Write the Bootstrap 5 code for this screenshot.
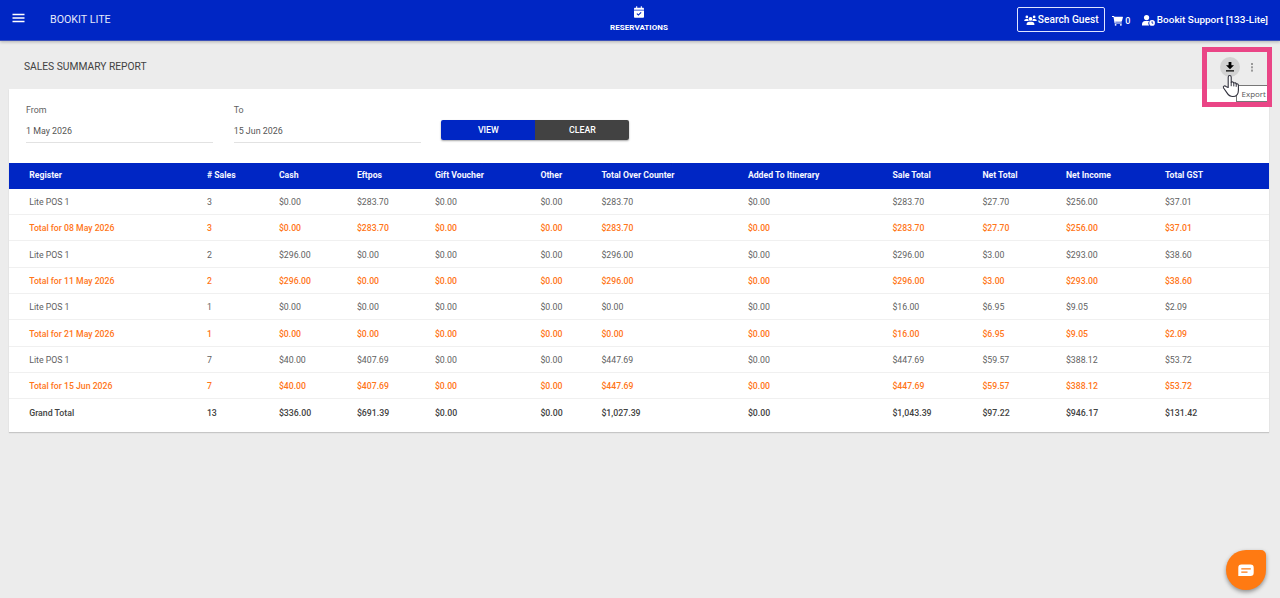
<!DOCTYPE html>
<html lang="en">
<head>
<meta charset="utf-8">
<meta name="viewport" content="width=device-width, initial-scale=1">
<title>Sales Summary Report</title>
<link href="https://cdn.jsdelivr.net/npm/bootstrap@5.3.0/dist/css/bootstrap.min.css" rel="stylesheet">
<style>
body{font-family:Roboto,"Liberation Sans",sans-serif;font-size:9px;line-height:12px;background:#ececec;color:#616161;height:598px;overflow:hidden}
svg{display:block;flex:none}
.topbar{height:41px;background:#0026c4;border-bottom:1px solid #3c50b8;box-shadow:0 1px 3px rgba(0,0,0,.25);color:#fff;padding:0 12px}
.side{flex:1 1 0}
.brand{font-size:10.7px;margin-left:25px;margin-top:-1px;color:#e4e8fa}
.menu-icon{margin-top:-4px}
.res{font-size:8px;font-weight:700;line-height:10px;padding-top:6px;margin-left:-2px}
.res-label{margin-top:5px;letter-spacing:.05px}
.search{border:1px solid #dfe4ff;border-radius:2px;height:25px;width:88px;font-size:10.2px;font-weight:500;margin-top:-1px;gap:1px}
.cart{font-size:9px;font-weight:500;margin-left:7px;margin-top:2px;gap:2px}
.account{font-size:9.95px;font-weight:500;margin-left:11.5px;margin-top:0;gap:2px;white-space:nowrap}
.titlebar{height:48px;padding:0 15px 0 24px}
.page-title{font-size:10.25px;line-height:12px;color:#424242;margin-top:4px}
.tools{margin-top:3px;margin-right:11px;gap:10px}
.export{width:20px;height:20px;border-radius:50%;background:#d2d2d2}
.report{margin:-.5px 11px 0 9.4px;height:343.5px;background:#fff;box-shadow:0 1px 1px rgba(0,0,0,.16)}
.filters{height:74px;padding:15.5px 0 0 16.6px}
.field{width:187.5px;height:38.5px;border-bottom:1px solid #e2e2e2;margin-right:20.2px;font-size:8.9px}
.field label{display:block;margin-bottom:9px}
.field span{color:#555}
.actions{margin-top:16px;height:20px;width:188px;border-radius:2px;overflow:hidden;box-shadow:0 1px 2px rgba(0,0,0,.35)}
.actions .btn{font-size:8.8px;line-height:20px;padding:0;border:0;border-radius:0;font-weight:500;color:#fff;background:#0026c4}
.actions .btn.clear{background:#424242}
.sales{table-layout:fixed;width:100%;border-collapse:separate;border-spacing:0;font-size:8.75px}
.sales th,.sales td{padding:1.4px 0 0;height:26.35px;white-space:nowrap;border-bottom:1px solid #f0f0f0;vertical-align:middle}
.sales th{height:26px;padding:0 0 1.4px;background:#0026c4;color:#f5f6ff;font-size:8.7px;font-weight:700;border:0}
.sales th:first-child,.sales td:first-child{padding-left:19.8px}
.sales .sum td{color:#ff7619;font-weight:500;font-size:8.7px}
.sales .grand td{color:#424242;font-weight:500;border:0}
.highlight{position:absolute;left:1202px;top:47px;width:70px;height:60px;border:5px solid #ea4586}
.tip{position:absolute;left:1236px;top:85px;width:31px;height:17px;border:1px solid #777;border-right:0;background:#fff;color:#575757;font:8px/15px "Open Sans",sans-serif;padding-left:4.5px;white-space:nowrap}
.hand{position:absolute;left:1222px;top:74px}
.chat{position:absolute;left:1226px;top:550px;width:40px;height:40px;border-radius:20px 5px 20px 20px;background:#ff7a12;box-shadow:0 2px 4px rgba(0,0,0,.4)}
</style>
</head>
<body>
<header class="topbar d-flex align-items-center">
  <div class="side d-flex align-items-center">
    <svg class="menu-icon" width="13" height="10" viewBox="0 0 13 10"><path d="M.5 1.5h12M.5 5h12M.5 8.5h12" stroke="#fff" stroke-width="1.5"/></svg>
    <div class="brand">BOOKIT LITE</div>
  </div>
  <div class="res d-flex flex-column align-items-center align-self-start">
    <svg width="10" height="12" viewBox="0 0 448 512"><path fill="#fff" d="M96 0h48v64h160V0h48v64h48c26 0 48 22 48 48v48H0v-48c0-26 22-48 48-48h48zM0 192h448v272c0 26-22 48-48 48H48c-26 0-48-22-48-48zm337 98-34-34-105 105-53-53-34 34 87 87z"/></svg>
    <div class="res-label">RESERVATIONS</div>
  </div>
  <div class="side d-flex align-items-center justify-content-end">
    <div class="search d-flex align-items-center justify-content-center">
      <svg width="13" height="10" viewBox="0 0 640 512"><path fill="#fff" d="M224 200a96 96 0 1 1 192 0 96 96 0 1 1-192 0M64 100a70 70 0 1 1 140 0 70 70 0 1 1-140 0m372 0a70 70 0 1 1 140 0 70 70 0 1 1-140 0M0 300c0-60 40-100 100-100h70c20 0 25 5 25 5 0 50 20 85 50 105H0zm395 10c30-20 50-55 50-105l25-5h70c60 0 100 40 100 100v10zM120 480c0-80 50-130 130-130h140c80 0 130 50 130 130v32H120z"/></svg>
      <span>Search Guest</span>
    </div>
    <div class="cart d-flex align-items-center">
      <svg width="11" height="10" viewBox="0 0 576 512"><path fill="#fff" d="M0 0h95c18 0 28 12 31 32h425c17 0 27 14 23 30l-52 200c-5 18-18 28-36 28H170l8 46h334v48H138L78 48H0z"/><circle cx="190" cy="458" r="50" fill="#fff"/><circle cx="465" cy="458" r="50" fill="#fff"/></svg>
      <span>0</span>
    </div>
    <div class="account d-flex align-items-center">
      <svg width="13" height="11" viewBox="0 0 640 540"><circle cx="225" cy="128" r="128" fill="#fff"/><path fill="#fff" d="M0 512v-62c0-90 60-160 150-160h150c40 0 60 10 60 10-70 60-60 150-10 212z"/><circle cx="496" cy="390" r="140" fill="#fff"/><path d="M496 310v90h60" fill="none" stroke="#0026c4" stroke-width="44"/></svg>
      <span>Bookit Support [133-Lite]</span>
    </div>
  </div>
</header>

<div class="titlebar d-flex align-items-center justify-content-between">
  <h1 class="page-title mb-0 fw-normal">SALES SUMMARY REPORT</h1>
  <div class="tools d-flex align-items-center">
    <div class="export d-flex align-items-center justify-content-center"><svg width="8" height="10" viewBox="0 0 8 10"><path d="M2.6 0h2.8v3.2H8L4 7.2 0 3.2h2.6zM0 8.2h8v1.3H0z"/></svg></div>
    <svg width="4" height="10" viewBox="0 0 4 10" fill="#999"><rect x="1" y="1" width="2" height="2"/><rect x="1" y="4.3" width="2" height="2"/><rect x="1" y="7.6" width="2" height="2"/></svg>
  </div>
</div>

<main class="report">
  <div class="filters d-flex">
    <div class="field"><label>From</label><span>1 May 2026</span></div>
    <div class="field"><label>To</label><span>15 Jun 2026</span></div>
    <div class="actions d-flex"><button class="btn flex-fill w-50">VIEW</button><button class="btn clear flex-fill w-50">CLEAR</button></div>
  </div>
  <table class="sales">
    <colgroup><col style="width:197.5px"><col style="width:72px"><col style="width:78px"><col style="width:78px"><col style="width:105.5px"><col style="width:61px"><col style="width:146.5px"><col style="width:144.5px"><col style="width:90px"><col style="width:83.5px"><col style="width:99px"><col></colgroup>
    <thead><tr><th>Register</th><th># Sales</th><th>Cash</th><th>Eftpos</th><th>Gift Voucher</th><th>Other</th><th>Total Over Counter</th><th>Added To Itinerary</th><th>Sale Total</th><th>Net Total</th><th>Net Income</th><th>Total GST</th></tr></thead>
    <tbody>
      <tr><td>Lite POS 1</td><td>3</td><td>$0.00</td><td>$283.70</td><td>$0.00</td><td>$0.00</td><td>$283.70</td><td>$0.00</td><td>$283.70</td><td>$27.70</td><td>$256.00</td><td>$37.01</td></tr>
      <tr class="sum"><td>Total for 08 May 2026</td><td>3</td><td>$0.00</td><td>$283.70</td><td>$0.00</td><td>$0.00</td><td>$283.70</td><td>$0.00</td><td>$283.70</td><td>$27.70</td><td>$256.00</td><td>$37.01</td></tr>
      <tr><td>Lite POS 1</td><td>2</td><td>$296.00</td><td>$0.00</td><td>$0.00</td><td>$0.00</td><td>$296.00</td><td>$0.00</td><td>$296.00</td><td>$3.00</td><td>$293.00</td><td>$38.60</td></tr>
      <tr class="sum"><td>Total for 11 May 2026</td><td>2</td><td>$296.00</td><td>$0.00</td><td>$0.00</td><td>$0.00</td><td>$296.00</td><td>$0.00</td><td>$296.00</td><td>$3.00</td><td>$293.00</td><td>$38.60</td></tr>
      <tr><td>Lite POS 1</td><td>1</td><td>$0.00</td><td>$0.00</td><td>$0.00</td><td>$0.00</td><td>$0.00</td><td>$0.00</td><td>$16.00</td><td>$6.95</td><td>$9.05</td><td>$2.09</td></tr>
      <tr class="sum"><td>Total for 21 May 2026</td><td>1</td><td>$0.00</td><td>$0.00</td><td>$0.00</td><td>$0.00</td><td>$0.00</td><td>$0.00</td><td>$16.00</td><td>$6.95</td><td>$9.05</td><td>$2.09</td></tr>
      <tr><td>Lite POS 1</td><td>7</td><td>$40.00</td><td>$407.69</td><td>$0.00</td><td>$0.00</td><td>$447.69</td><td>$0.00</td><td>$447.69</td><td>$59.57</td><td>$388.12</td><td>$53.72</td></tr>
      <tr class="sum"><td>Total for 15 Jun 2026</td><td>7</td><td>$40.00</td><td>$407.69</td><td>$0.00</td><td>$0.00</td><td>$447.69</td><td>$0.00</td><td>$447.69</td><td>$59.57</td><td>$388.12</td><td>$53.72</td></tr>
      <tr class="grand"><td>Grand Total</td><td>13</td><td>$336.00</td><td>$691.39</td><td>$0.00</td><td>$0.00</td><td>$1,027.39</td><td>$0.00</td><td>$1,043.39</td><td>$97.22</td><td>$946.17</td><td>$131.42</td></tr>
    </tbody>
  </table>
</main>

<div class="tip">Export</div>
<div class="highlight"></div>
<svg class="hand" width="18" height="24" viewBox="0 0 18 24"><path d="M6.2 13.5V3.2c0-2.3 3-2.3 3 0v5.2c1-.9 2.4-.5 2.6.7.9-.7 2.2-.2 2.4.9 1-.5 2.2 0 2.2 1.4v4.8c0 4-2.3 6.3-5.6 6.3-3 0-4.3-1.2-5.8-3.6L1.6 14c-.9-1.7 1-2.8 2.3-1.6z" fill="#fff" stroke="#30303c" stroke-width="1.1" stroke-linejoin="round"/><path d="M9.2 8.4v3.8M11.8 9.2v3.2M14.2 10v2.8" stroke="#30303c"/></svg>
<div class="chat d-flex align-items-center justify-content-center"><svg width="16" height="13" viewBox="0 0 16 13"><path d="M3.5.5h9A3.2 3.2 0 0 1 15.7 3.7v5.1a3.2 3.2 0 0 1-3.2 3.2H.3V3.7A3.2 3.2 0 0 1 3.5.5z" fill="#fff"/><path d="M3.3 4.9h9.5M3.3 8.1h6.2" stroke="#ff7a12" stroke-width="1.4"/></svg></div>
<script src="https://cdn.jsdelivr.net/npm/bootstrap@5.3.0/dist/js/bootstrap.bundle.min.js"></script>
</body>
</html>
